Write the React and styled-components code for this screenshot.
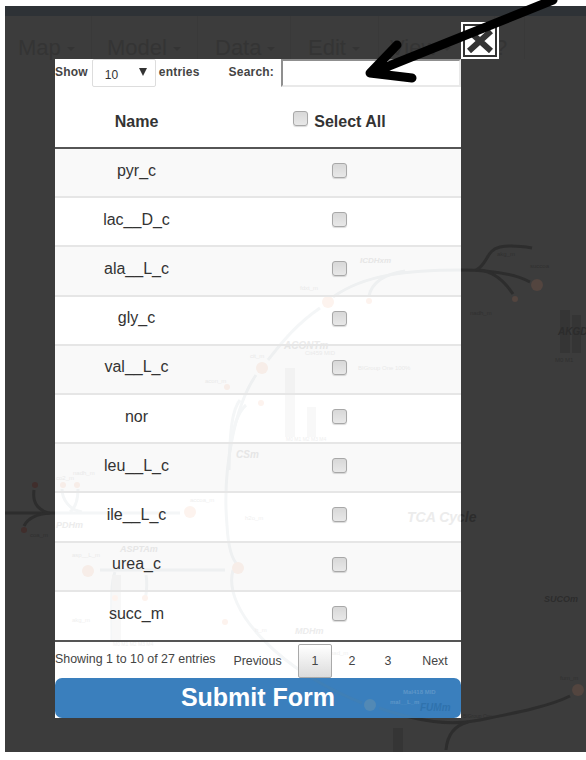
import styled, { createGlobalStyle } from 'styled-components'

const GlobalStyle = createGlobalStyle`
  html, body {
    margin: 0;
    padding: 0;
    background: #fff;
    font-family: "Liberation Sans", Arial, sans-serif;
  }
`

const Page = styled.div`
  position: relative;
  width: 586px;
  height: 760px;
  padding: 6px 0 8px 5px;
  box-sizing: border-box;
  overflow: hidden;
`

const Backdrop = styled.div`
  position: relative;
  width: 581px;
  height: 746px;
  background: #3c3c3c;
  overflow: hidden;
`

const TopBar = styled.div`
  height: 10px;
  background: #2e3236;
`

const Nav = styled.nav`
  position: relative;
  display: flex;
  height: 43px;
  color: #343434;
  font-size: 22px;
`

const NavItem = styled.span`
  display: flex;
  align-items: center;
  gap: 6px;
  box-sizing: border-box;
  width: ${(props) => props.$width}px;
  height: 43px;
  padding: 20px 0 0 ${(props) => props.$pad}px;
  border-right: 1px solid #393939;
  white-space: nowrap;
`

const Caret = styled.i`
  display: block;
  width: 0;
  height: 0;
  margin-top: 3px;
  border-left: 4px solid transparent;
  border-right: 4px solid transparent;
  border-top: 4px solid #343434;
`

const MapLayer = styled.svg`
  position: absolute;
  left: ${(props) => props.$left}px;
  top: ${(props) => props.$top}px;
  width: 586px;
  height: 760px;
  pointer-events: none;
`

const ModalWrap = styled.div`
  position: relative;
  width: 406px;
  height: 659px;
  margin-left: 50px;
`

const Modal = styled.div`
  position: relative;
  height: 100%;
  background: #fff;
  overflow: hidden;
  color: #333;
`

const Content = styled.div`
  position: relative;
  display: flex;
  flex-direction: column;
  height: 100%;
`

const Controls = styled.div`
  display: flex;
  align-items: flex-start;
  height: 28px;
  font-size: 12px;
  font-weight: bold;
  letter-spacing: 0.2px;
  color: #444;
`

const ControlLabel = styled.label`
  display: flex;
  align-items: center;
  height: 27px;
  margin-left: ${(props) => props.$left || 0}px;
  white-space: nowrap;
  transform: translateY(-1px);
`

const SelectBox = styled.div`
  position: relative;
  width: 64px;
  height: 28px;
  margin: 0 3px 0 4px;
`

const Select = styled.select`
  appearance: none;
  width: 100%;
  height: 100%;
  padding: 3px 0 0 12px;
  border: 1px solid #ddd;
  border-radius: 2px;
  background: #fff;
  color: #333;
  font: 12px "Liberation Sans", Arial, sans-serif;
`

const SelectArrow = styled.span`
  position: absolute;
  top: 9px;
  right: 9px;
  width: 0;
  height: 0;
  border-left: 4px solid transparent;
  border-right: 4px solid transparent;
  border-top: 8px solid #333;
`

const SearchInput = styled.input`
  width: 180px;
  height: 28px;
  margin-left: auto;
  padding: 0 4px;
  box-sizing: border-box;
  border: 2px solid #e9e9e9;
  border-top-color: #8f8f8f;
  border-left-color: #8f8f8f;
  background: #fff;
`

const Table = styled.table`
  width: 406px;
  table-layout: fixed;
  border-collapse: collapse;
  font-size: 16px;
`

const HeadCell = styled.th`
  height: 61px;
  padding: 10px 0 0;
  border-bottom: 2px solid #555;
  box-sizing: border-box;
  font-size: 16px;
  font-weight: bold;
  color: #333;
  text-align: center;
  vertical-align: middle;
`

const SelectAll = styled.span`
  display: inline-flex;
  align-items: flex-start;
  gap: 6px;
  line-height: 18px;
  transform: translateY(-1px);
`

const Row = styled.tr`
  background: ${(props) => (props.$odd ? 'rgba(0, 0, 0, 0.025)' : 'transparent')};
`

const Cell = styled.td`
  height: 49.2px;
  padding: 0 0 4px;
  border-bottom: ${(props) => (props.$last ? 'none' : '2px solid #e6e6e6')};
  box-sizing: border-box;
  text-align: center;
  vertical-align: middle;
  color: #333;
`

const Checkbox = styled.input`
  appearance: none;
  display: block;
  width: 15px;
  height: 15px;
  margin: ${(props) => (props.$head ? '-2px 0 0' : '0 auto')};
  border: 1px solid #a8a8a8;
  border-radius: 3px;
  background: linear-gradient(#d8d8d8, #e8e8e8);
  box-shadow: 0 1px 1px rgba(0, 0, 0, 0.15);
`

const Footer = styled.div`
  display: flex;
  align-items: center;
  box-sizing: border-box;
  height: 39px;
  margin-top: auto;
  border-top: 2px solid #555;
  font-size: 12.4px;
  color: #444;
`

const Info = styled.span`
  width: 170px;
  margin-top: -2px;
  white-space: nowrap;
`

const Pager = styled.div`
  display: flex;
  align-items: center;
  height: 100%;
`

const PageLink = styled.span`
  display: flex;
  align-items: center;
  justify-content: center;
  box-sizing: border-box;
  width: ${(props) => props.$width}px;
  height: 34px;
  margin-top: 1px;
  margin-right: ${(props) => props.$after || 0}px;
  padding-left: ${(props) => props.$shift || 0}px;
  border: 1px solid ${(props) => (props.$active ? '#a9a9a9' : 'transparent')};
  border-radius: 2px;
  background: ${(props) => (props.$active ? 'linear-gradient(#fff, #dcdcdc)' : 'none')};
`

const SubmitButton = styled.button`
  position: relative;
  display: block;
  width: 406px;
  height: 40px;
  padding: 0 0 2px;
  border: none;
  border-radius: 7px;
  background: #3a7fbd;
  color: #fff;
  font: bold 25px "Liberation Sans", Arial, sans-serif;
  overflow: hidden;
`

const SubmitLabel = styled.span`
  position: relative;
`

const CloseButton = styled.button`
  position: absolute;
  top: -37px;
  right: -38px;
  display: flex;
  align-items: center;
  justify-content: center;
  width: 38px;
  height: 37px;
  padding: 0;
  box-sizing: border-box;
  border: 2px solid #fff;
  outline: 2px solid #333;
  outline-offset: -4px;
  background: #fff;
`

const ArrowLayer = styled.svg`
  position: absolute;
  left: 0;
  top: 0;
  width: 586px;
  height: 760px;
  pointer-events: none;
`

const names = ['pyr_c', 'lac__D_c', 'ala__L_c', 'gly_c', 'val__L_c', 'nor', 'leu__L_c', 'ile__L_c', 'urea_c', 'succ_m']

const curves = [
  'M333 297C365 274 410 270 460 270C490 270 515 274 530 282',
  'M369 296C372 282 385 274 405 271',
  'M476 270C488 264 486 250 500 247C510 245 520 246 532 248',
  'M480 270C495 272 505 282 513 294',
  'M320 308C295 325 280 345 268 360',
  'M227 525C222 470 235 405 256 375',
  'M240 400C232 410 230 430 229 470',
  'M246 405C238 412 233 425 230 450',
  'M227 525C228 545 232 560 238 565',
  'M233 570C222 610 280 670 362 703',
  'M379 708C420 722 450 726 480 720C520 712 550 706 570 696',
  'M468 722C452 726 447 738 446 750',
  'M5 513H180',
  'M34 490C32 505 40 510 48 513',
  'M24 526C28 518 36 514 50 513',
  'M62 489C62 500 70 510 82 512',
  'M78 489C78 500 75 508 70 512',
  'M100 570H225',
  'M115 572C110 585 112 610 112 640',
  'M146 575C148 585 146 595 145 600',
]

const nodes = [
  [328, 302, 6, 'warm'], [369, 301, 3, 'warm'], [262, 368, 6, 'warm'], [227, 387, 3, 'warm'],
  [261, 403, 3, 'warm'], [190, 512, 6, 'warm'], [238, 568, 6, 'warm'], [88, 571, 6, 'warm'],
  [115, 598, 3, 'warm'], [145, 598, 3, 'warm'], [63, 485, 3, 'warm'], [77, 485, 3, 'warm'],
  [35, 485, 3, 'dark'], [24, 530, 3, 'dark'], [537, 285, 6, 'warm'], [515, 299, 3, 'warm'],
  [578, 690, 6, 'warm'], [370, 705, 6, 'blue'], [225, 622, 3, 'warm'],
]

const bars = [
  [285, 368, 10, 69], [307, 407, 9, 30], [560, 310, 10, 43], [572, 315, 9, 38],
  [393, 728, 10, 24], [112, 575, 9, 65],
]

const labels = [
  [250, 358, 'cit_m', 6], [300, 290, 'fdxt_m', 6], [497, 256, 'akg_m', 6], [530, 268, 'succoa', 6],
  [470, 315, 'nadh_m', 6], [358, 370, 'BIGroup One 100%', 6], [305, 355, 'Cit459 MID', 6],
  [205, 383, 'acon_m', 6], [286, 441, 'M0 M1 M2 M3 M4', 5], [72, 557, 'asp__L_m', 6],
  [190, 502, 'accoa_m', 6], [73, 475, 'nadh_m', 6], [56, 480, 'co2_m', 6], [30, 537, 'coa_m', 6],
  [113, 646, 'M0 M1 M2 M3 M4', 5], [72, 622, 'akg_m', 6], [245, 520, 'h2o_m', 6],
  [560, 680, 'fum_m', 6], [403, 694, 'Mal418 MID', 6], [390, 704, 'mal__L_m', 6],
  [463, 718, 'BIGroup One', 5], [255, 632, 'h_m', 6], [330, 655, 'nad_m', 6],
  [555, 362, 'M0 M1', 6],
]

const headings = [
  [284, 349, 'ACONTm', 10], [236, 458, 'CSm', 10], [407, 522, 'TCA Cycle', 14], [544, 602, 'SUCOm', 9],
  [56, 528, 'PDHm', 9], [120, 552, 'ASPTAm', 9], [295, 634, 'MDHm', 9], [420, 711, 'FUMm', 10],
  [360, 263, 'ICDHxm', 8], [558, 335, 'AKGDm', 10],
]

// which part of the page a map text shows in, so each layer only draws its own
const overlapsModal = (x, y, width) => x < 461 && x + width > 55 && y > 59 && y < 678
const overlapsButton = (x, y, width) => x < 461 && x + width > 55 && y >= 678 && y < 718
const insideSheet = (x, y, width) => x >= 55 && x + width <= 461 && y > 59 && y < 718

const regions = {
  backdrop: (x, y, width) => !insideSheet(x, y, width),
  modal: overlapsModal,
  button: overlapsButton,
}

function MapArt({ region, left, top, line, text, heading, warm, dark, bar, blue }) {
  const fills = { warm, dark, blue }
  const shows = ([x, y, label, size]) => regions[region](x, y, label.length * size * 0.55)

  return (
    <MapLayer $left={left} $top={top} viewBox="0 0 586 760" aria-hidden="true">
      <g fill="none" stroke={line} strokeWidth="3">
        {curves.map((d) => (
          <path key={d} d={d} />
        ))}
      </g>
      {bars.map(([x, y, w, h]) => (
        <rect key={`${x}-${y}`} x={x} y={y} width={w} height={h} fill={bar} />
      ))}
      {nodes.map(([x, y, r, kind]) => (
        <circle key={`${x}-${y}`} cx={x} cy={y} r={r} fill={fills[kind]} />
      ))}
      <g fontFamily="Liberation Sans, Arial, sans-serif" fill={text}>
        {labels.filter(shows).map(([x, y, label, size]) => (
          <text key={`${x}-${y}`} x={x} y={y} fontSize={size}>
            {label}
          </text>
        ))}
      </g>
      <g fontFamily="Liberation Sans, Arial, sans-serif" fontStyle="italic" fontWeight="bold" fill={heading}>
        {headings.filter(shows).map(([x, y, label, size]) => (
          <text key={label} x={x} y={y} fontSize={size}>
            {label}
          </text>
        ))}
      </g>
    </MapLayer>
  )
}

function App() {
  return (
    <Page>
      <GlobalStyle />
      <Backdrop>
        <MapArt
          region="backdrop"
          left={-5}
          top={-6}
          line="#2d2d2d"
          text="#303030"
          heading="#2c2c2c"
          warm="#53453f"
          dark="#402e2c"
          blue="#3c3c3c"
          bar="#353535"
        />
        <TopBar />
        <Nav>
          <NavItem $width={87} $pad={13}>Map <Caret /></NavItem>
          <NavItem $width={106} $pad={15}>Model <Caret /></NavItem>
          <NavItem $width={93} $pad={17}>Data <Caret /></NavItem>
          <NavItem $width={88} $pad={17}>Edit <Caret /></NavItem>
          <NavItem $width={116} $pad={11}>View <Caret /></NavItem>
          <NavItem $width={30} $pad={0}>?</NavItem>
        </Nav>
        <ModalWrap>
          <Modal>
            <MapArt
              region="modal"
              left={-55}
              top={-59}
              line="#f4f6f7"
              text="#efefef"
              heading="#ececec"
              warm="#fdf3ee"
              dark="#f2f2f2"
              blue="#f4f6f7"
              bar="#f8f8f8"
            />
            <Content>
              <Controls>
                <ControlLabel htmlFor="page-size">Show</ControlLabel>
                <SelectBox>
                  <Select id="page-size" defaultValue="10">
                    <option>10</option>
                    <option>25</option>
                    <option>50</option>
                  </Select>
                  <SelectArrow />
                </SelectBox>
                <ControlLabel as="span">entries</ControlLabel>
                <ControlLabel htmlFor="search" $left={29}>Search:</ControlLabel>
                <SearchInput id="search" type="text" />
              </Controls>
              <Table>
                <colgroup>
                  <col width="163" />
                  <col width="243" />
                </colgroup>
                <thead>
                  <tr>
                    <HeadCell>Name</HeadCell>
                    <HeadCell>
                      <SelectAll>
                        <Checkbox $head type="checkbox" aria-label="Select All" />
                        Select All
                      </SelectAll>
                    </HeadCell>
                  </tr>
                </thead>
                <tbody>
                  {names.map((name, i) => (
                    <Row key={name} $odd={i % 2 === 0}>
                      <Cell $last={i === names.length - 1}>{name}</Cell>
                      <Cell $last={i === names.length - 1}>
                        <Checkbox type="checkbox" aria-label={name} />
                      </Cell>
                    </Row>
                  ))}
                </tbody>
              </Table>
              <Footer>
                <Info>Showing 1 to 10 of 27 entries</Info>
                <Pager>
                  <PageLink $width={65} $after={8}>Previous</PageLink>
                  <PageLink $width={34} $active>1</PageLink>
                  <PageLink $width={40}>2</PageLink>
                  <PageLink $width={32}>3</PageLink>
                  <PageLink $width={57} $shift={5}>Next</PageLink>
                </Pager>
              </Footer>
              <SubmitButton type="button">
                <MapArt
                  region="button"
                  left={-55}
                  top={-678}
                  line="#3f7fb6"
                  text="#5d96c8"
                  heading="#2f72ad"
                  warm="#3a7fbd"
                  dark="#3a7fbd"
                  blue="#5289b5"
                  bar="#3a7fbd"
                />
                <SubmitLabel>Submit Form</SubmitLabel>
              </SubmitButton>
            </Content>
          </Modal>
          <CloseButton type="button" aria-label="Close">
            <svg width="26" height="24" viewBox="0 0 26 24">
              <path d="M2 22L24 2M2 2L24 22" stroke="#333" strokeWidth="6" fill="none" />
            </svg>
          </CloseButton>
        </ModalWrap>
      </Backdrop>
      <ArrowLayer viewBox="0 0 586 760" aria-hidden="true">
        <path
          d="M553 0L374 72M397 45L370 73L412 78"
          fill="none"
          stroke="#000"
          strokeWidth="9"
          strokeLinecap="round"
          strokeLinejoin="round"
        />
      </ArrowLayer>
    </Page>
  )
}

export default App
